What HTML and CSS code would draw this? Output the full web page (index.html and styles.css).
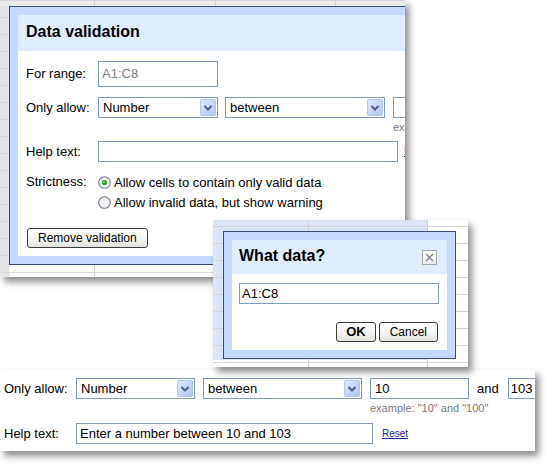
FILE: index.html
```html
<!DOCTYPE html>
<html>
<head>
<meta charset="utf-8">
<title>Data validation</title>
<link rel="stylesheet" href="styles.css">
</head>
<body>

<div class="shot shot-main">
  <div class="dlg dlg-main">
    <div class="dlg-title title-main">Data validation</div>
    <div class="dlg-body body-main">
      <div class="row row-range">
        <span class="lbl lbl-tall">For range:</span>
        <span class="field field-range">A1:C8</span>
      </div>
      <div class="row row-allow">
        <span class="lbl">Only allow:</span>
        <span class="select sel-type"><span class="sel-text">Number</span><span class="sel-btn"><svg width="14" height="15" viewBox="0 0 14 15"><path d="M3.5 6 L7 9.5 L10.5 6" fill="none" stroke="#4d6185" stroke-width="2"/></svg></span></span>
        <span class="select sel-op"><span class="sel-text">between</span><span class="sel-btn"><svg width="14" height="15" viewBox="0 0 14 15"><path d="M3.5 6 L7 9.5 L10.5 6" fill="none" stroke="#4d6185" stroke-width="2"/></svg></span></span>
        <span class="num-col num-col1"><span class="field field-num"></span><span class="hint">example: "10" and "100"</span></span>
      </div>
      <div class="row row-help">
        <span class="lbl">Help text:</span>
        <span class="field field-help"></span>
        <a class="reset reset-main" href="#">Reset</a>
      </div>
      <div class="row row-strict">
        <span class="lbl lbl-strict">Strictness:</span>
        <div class="radios">
          <div class="radio-line">
            <svg class="radio" width="13" height="13" viewBox="0 0 13 13"><circle cx="6.5" cy="6.5" r="5.8" fill="#f3f3ef" stroke="#6a7c92" stroke-width="1.1"/><circle cx="6.5" cy="6.5" r="2.6" fill="#2f9e2f"/><circle cx="6" cy="6" r="1" fill="#8fdc8f"/></svg>
            <span>Allow cells to contain only valid data</span>
          </div>
          <div class="radio-line">
            <svg class="radio" width="13" height="13" viewBox="0 0 13 13"><circle cx="6.5" cy="6.5" r="5.8" fill="#f3f3ef" stroke="#6a7c92" stroke-width="1.1"/></svg>
            <span>Allow invalid data, but show warning</span>
          </div>
        </div>
      </div>
      <button class="btn btn-remove" type="button">Remove validation</button>
    </div>
  </div>
</div>

<div class="shot shot-what">
  <div class="dlg dlg-what">
    <div class="dlg-title title-what">
      <span class="title-text">What data?</span>
      <span class="close-box"><svg width="13" height="13" viewBox="0 0 13 13"><path d="M3 3 L10 10 M10 3 L3 10" stroke="#8c8c8c" stroke-width="1.6"/></svg></span>
    </div>
    <div class="dlg-body body-what">
      <span class="field field-what">A1:C8</span>
      <div class="btn-row">
        <button class="btn btn-ok" type="button">OK</button>
        <button class="btn btn-cancel" type="button">Cancel</button>
      </div>
    </div>
  </div>
</div>

<div class="shot shot-edit">
  <div class="row row-allow2">
    <span class="lbl">Only allow:</span>
    <span class="select sel-type2"><span class="sel-text">Number</span><span class="sel-btn"><svg width="14" height="15" viewBox="0 0 14 15"><path d="M3.5 6 L7 9.5 L10.5 6" fill="none" stroke="#4d6185" stroke-width="2"/></svg></span></span>
    <span class="select sel-op2"><span class="sel-text">between</span><span class="sel-btn"><svg width="14" height="15" viewBox="0 0 14 15"><path d="M3.5 6 L7 9.5 L10.5 6" fill="none" stroke="#4d6185" stroke-width="2"/></svg></span></span>
    <span class="num-col num-col2"><span class="field field-num2">10</span><span class="hint">example: "10" and "100"</span></span>
    <span class="and">and</span>
    <span class="field field-max">103</span>
  </div>
  <div class="row row-help2">
    <span class="lbl">Help text:</span>
    <span class="field field-help2">Enter a number between 10 and 103</span>
    <a class="reset" href="#">Reset</a>
  </div>
</div>

</body>
</html>
```

FILE: styles.css
```css
* { box-sizing: border-box; }

html, body {
  margin: 0;
  padding: 0;
}

body {
  width: 550px;
  height: 468px;
  position: relative;
  overflow: hidden;
  background: #fff;
  font-family: "Liberation Sans", Arial, sans-serif;
  font-size: 13px;
  color: #000;
}

/* screenshot panels on the free canvas */
.shot {
  position: absolute;
  overflow: hidden;
  box-shadow: 4px 5px 7px rgba(0, 0, 0, 0.45);
}

.shot-main {
  left: 0;
  top: 0;
  width: 405px;
  height: 277px;
  z-index: 1;
  background:
    linear-gradient(to right, transparent 94px, #cfcfcf 94px 95px, transparent 95px 215px, #cfcfcf 215px 216px, transparent 216px 335px, #cfcfcf 335px 336px, transparent 336px),
    repeating-linear-gradient(to bottom, #d6d6d6 0 1px, transparent 1px 17px),
    linear-gradient(to bottom, #ebebeb 0 6px, transparent 6px),
    linear-gradient(to right, #e4e4e4 0 9px, transparent 9px),
    #fff;
}

.shot-what {
  left: 213px;
  top: 220px;
  width: 255px;
  height: 147px;
  z-index: 3;
  background:
    linear-gradient(to right, transparent 95px, #cfcfcf 95px 96px, transparent 96px 214px, #cfcfcf 214px 215px, transparent 215px),
    repeating-linear-gradient(to bottom, transparent 0 6px, #d4d4d4 6px 7px, transparent 7px 17px),
    linear-gradient(#dbe5f6, #dbe5f6) 0 0 / 214px 140px no-repeat,
    #fff;
}

.shot-edit {
  left: 0;
  top: 370px;
  width: 535px;
  height: 81px;
  z-index: 2;
  background: #fff;
  padding: 8px 0 0 4px;
}

/* dialogs */
.dlg {
  border: 1px solid #3b4e72;
  background: #c3d9ff;
}

.dlg-main {
  margin: 6px 0 0 9px;
  width: 430px;
  height: 259px;
  padding: 8px 8px 8px 8px;
}

.dlg-title {
  background: #e0ecff;
  font-weight: bold;
  font-size: 16px;
}

.title-main {
  height: 36px;
  line-height: 33px;
  padding-left: 8px;
}

.dlg-body {
  background: #fff;
}

.body-main {
  height: 205px;
  padding: 10px 8px 0 8px;
}

.row {
  display: flex;
  align-items: flex-start;
  white-space: nowrap;
}

.lbl {
  flex: none;
  width: 72px;
  line-height: 21px;
}

.lbl-tall { line-height: 26px; }

.field {
  flex: none;
  display: block;
  height: 21px;
  border: 1px solid #7f9db9;
  background: #fff;
  line-height: 19px;
  padding-left: 3px;
  overflow: hidden;
  white-space: nowrap;
}

.field-range {
  width: 120px;
  height: 26px;
  line-height: 24px;
  color: #808080;
}

.row-allow { margin-top: 10px; }

.select {
  flex: none;
  display: flex;
  height: 21px;
  border: 1px solid #7f9db9;
  background: #fff;
}

.sel-text {
  flex: 1;
  line-height: 19px;
  padding-left: 4px;
}

.sel-btn {
  flex: none;
  width: 16px;
  height: 17px;
  margin: 1px 1px 1px 0;
  border: 1px solid #b3c6ee;
  border-radius: 2px;
  background: linear-gradient(135deg, #e1eafe 0%, #c6d6fb 50%, #b1c6f5 100%);
  display: flex;
  align-items: center;
  justify-content: center;
}

.sel-btn svg { display: block; }

.sel-type { width: 120px; }
.sel-op { width: 160px; margin-left: 7px; }

.num-col {
  flex: none;
  display: flex;
  flex-direction: column;
  margin-left: 8px;
}

.num-col1 { width: 100px; }

.field-num { width: 100px; }

.hint {
  font-size: 11px;
  line-height: 13px;
  margin-top: 3px;
  color: #7a7a7a;
  white-space: nowrap;
}

.row-help { margin-top: 7px; }

.field-help { width: 300px; }

.reset {
  flex: none;
  margin-left: 9px;
  font-size: 10px;
  line-height: 21px;
  height: 21px;
  color: #1a1aa8;
  text-decoration: underline;
}

.reset-main { margin-left: 6px; }

.row-strict { margin-top: 10px; }

.lbl-strict { line-height: 20px; }

.radios {
  display: flex;
  flex-direction: column;
}

.radio-line {
  display: flex;
  align-items: center;
  height: 20px;
}

.radio {
  flex: none;
  display: block;
  margin-right: 3px;
}

.btn {
  display: block;
  height: 20px;
  padding: 0 10px;
  border: 1px solid #3c3c3c;
  border-radius: 3px;
  background: linear-gradient(to bottom, #ffffff 0%, #f4f4f0 60%, #e2e2dc 100%);
  font-family: "Liberation Sans", Arial, sans-serif;
  font-size: 12px;
  line-height: 18px;
  color: #000;
  white-space: nowrap;
}

.btn-remove {
  margin-top: 16px;
  margin-left: 1px;
}

/* "What data?" dialog */
.dlg-what {
  margin: 11px 0 0 10px;
  width: 233px;
  height: 128px;
  padding: 8px;
}

.title-what {
  height: 34px;
  display: flex;
  align-items: center;
  justify-content: space-between;
  padding: 0 10px 3px 7px;
}

.close-box {
  flex: none;
  width: 15px;
  height: 15px;
  margin-top: 3px;
  border: 1px solid #a6a6a6;
  background: linear-gradient(to bottom, #ffffff, #ececec);
  display: flex;
  align-items: center;
  justify-content: center;
}

.close-box svg { display: block; }

.body-what {
  height: 76px;
  padding: 9px 8px 0 7px;
}

.field-what {
  width: 200px;
  padding-left: 2px;
}

.btn-row {
  display: flex;
  justify-content: flex-end;
  gap: 3px;
  margin-top: 18px;
  margin-right: 1px;
}

.btn-ok {
  padding: 0 9px;
  font-weight: bold;
  font-size: 13px;
}

/* bottom edited strip */
.sel-type2 { width: 119px; }
.sel-op2 { width: 159px; margin-left: 8px; }

.num-col2 {
  width: 99px;
  margin-left: 8px;
}

.field-num2 {
  width: 99px;
  padding-left: 4px;
}

.and {
  flex: none;
  margin-left: 8px;
  line-height: 21px;
}

.field-max {
  width: 60px;
  margin-left: 9px;
  padding-left: 2px;
}

.row-help2 { margin-top: 8px; }

.field-help2 { width: 297px; }
```
